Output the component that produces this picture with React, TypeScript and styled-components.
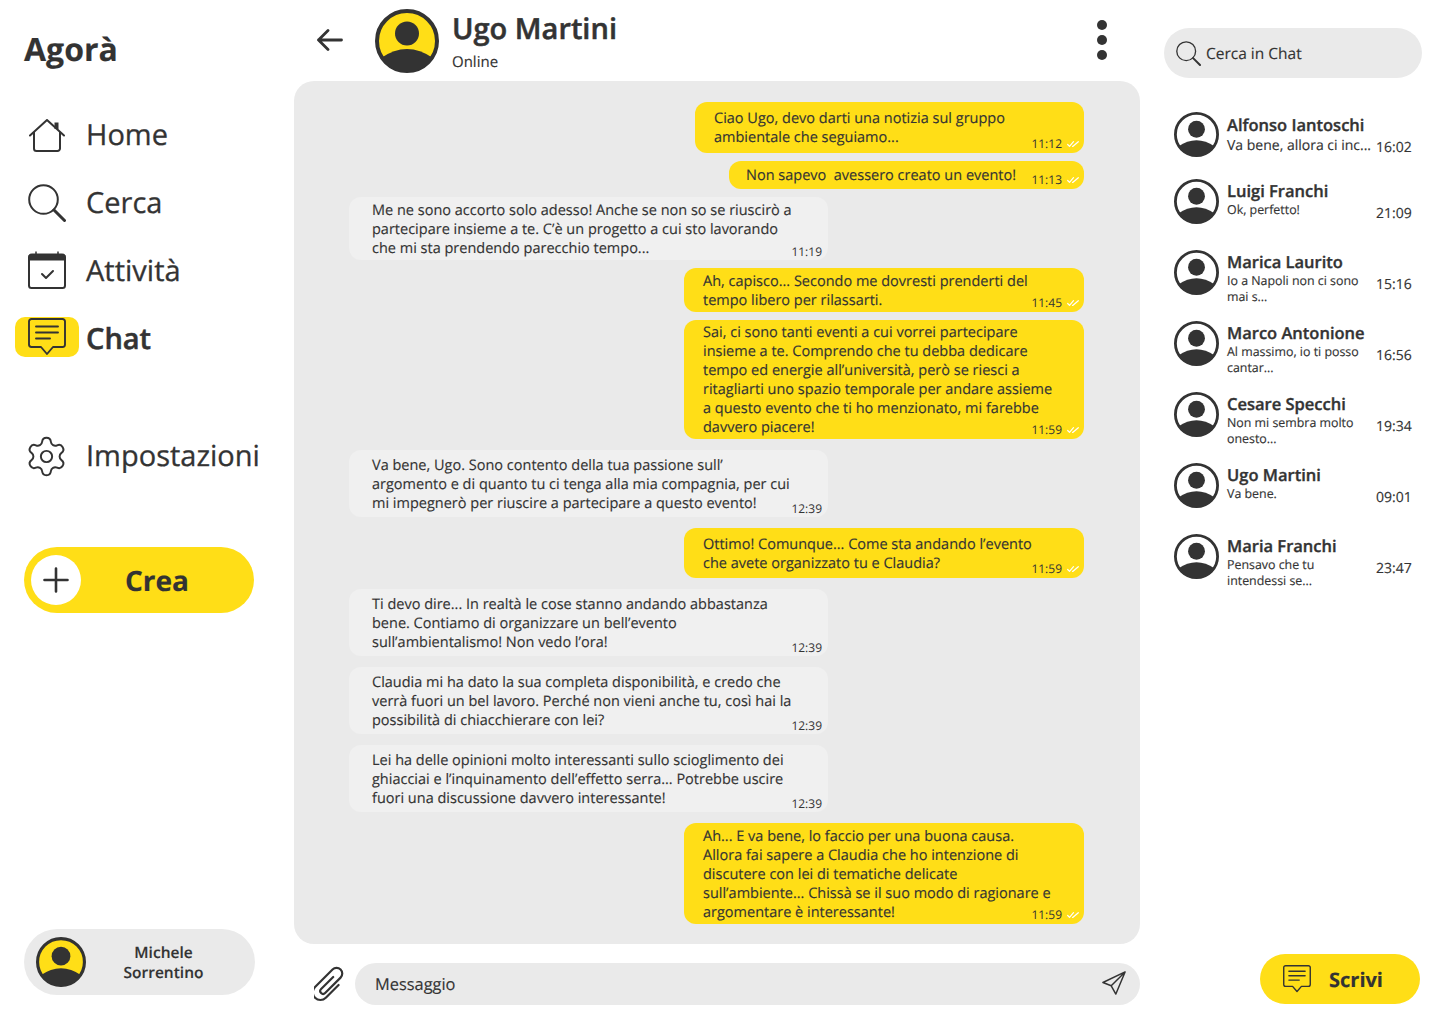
import styled, { createGlobalStyle } from "styled-components";
import { Settings } from "lucide-react";

const INK = "#333333";
const YELLOW = "#ffde17";
const GREY = "#eaeaea";

const messages = [
  { id: 1, mine: true, width: 389, height: 51, top: 7, left: 19, gap: 0, time: "11:12", text: "Ciao Ugo, devo darti una notizia sul gruppo\nambientale che seguiamo..." },
  { id: 2, mine: true, width: 355, height: 28, top: 5, left: 17, gap: 8, time: "11:13", text: "Non sapevo  avessero creato un evento!" },
  { id: 3, mine: false, width: 479, height: 63, top: 4, left: 23, gap: 8, time: "11:19", text: "Me ne sono accorto solo adesso! Anche se non so se riuscirò a\npartecipare insieme a te. C’è un progetto a cui sto lavorando\nche mi sta prendendo parecchio tempo..." },
  { id: 4, mine: true, width: 400, height: 44, top: 4, left: 19, gap: 8, time: "11:45", text: "Ah, capisco... Secondo me dovresti prenderti del\ntempo libero per rilassarti." },
  { id: 5, mine: true, width: 400, height: 119, top: 3, left: 19, gap: 8, time: "11:59", text: "Sai, ci sono tanti eventi a cui vorrei partecipare\ninsieme a te. Comprendo che tu debba dedicare\ntempo ed energie all’università, però se riesci a\nritagliarti uno spazio temporale per andare assieme\na questo evento che ti ho menzionato, mi farebbe\ndavvero piacere!" },
  { id: 6, mine: false, width: 479, height: 67, top: 6, left: 23, gap: 11, time: "12:39", text: "Va bene, Ugo. Sono contento della tua passione sull’\nargomento e di quanto tu ci tenga alla mia compagnia, per cui\nmi impegnerò per riuscire a partecipare a questo evento!" },
  { id: 7, mine: true, width: 400, height: 50, top: 7, left: 19, gap: 11, time: "11:59", text: "Ottimo! Comunque... Come sta andando l’evento\nche avete organizzato tu e Claudia?" },
  { id: 8, mine: false, width: 479, height: 67, top: 6, left: 23, gap: 11, time: "12:39", text: "Ti devo dire... In realtà le cose stanno andando abbastanza\nbene. Contiamo di organizzare un bell’evento\nsull’ambientalismo! Non vedo l’ora!" },
  { id: 9, mine: false, width: 479, height: 67, top: 6, left: 23, gap: 11, time: "12:39", text: "Claudia mi ha dato la sua completa disponibilità, e credo che\nverrà fuori un bel lavoro. Perché non vieni anche tu, così hai la\npossibilità di chiacchierare con lei?" },
  { id: 10, mine: false, width: 479, height: 67, top: 6, left: 23, gap: 11, time: "12:39", text: "Lei ha delle opinioni molto interessanti sullo scioglimento dei\nghiacciai e l’inquinamento dell’effetto serra... Potrebbe uscire\nfuori una discussione davvero interessante!" },
  { id: 11, mine: true, width: 400, height: 101, top: 4, left: 19, gap: 11, time: "11:59", text: "Ah... E va bene, lo faccio per una buona causa.\nAllora fai sapere a Claudia che ho intenzione di\ndiscutere con lei di tematiche delicate\nsull’ambiente... Chissà se il suo modo di ragionare e\nargomentare è interessante!" },
];

const chats = [
  { name: "Alfonso Iantoschi", preview: "Va bene, allora ci inc...", time: "16:02", big: true },
  { name: "Luigi Franchi", preview: "Ok, perfetto!", time: "21:09" },
  { name: "Marica Laurito", preview: "Io a Napoli non ci sono\nmai s...", time: "15:16" },
  { name: "Marco Antonione", preview: "Al massimo, io ti posso\ncantar...", time: "16:56" },
  { name: "Cesare Specchi", preview: "Non mi sembra molto\nonesto...", time: "19:34" },
  { name: "Ugo Martini", preview: "Va bene.", time: "09:01" },
  { name: "Maria Franchi", preview: "Pensavo che tu\nintendessi se...", time: "23:47" },
];

function Avatar({ size, fill }: { size: number; fill: string }) {
  return (
    <svg width={size} height={size} viewBox="0 0 64 64" style={{ flexShrink: 0 }}>
      <circle cx="32" cy="32" r="30" fill={fill} stroke={INK} strokeWidth="4" />
      <circle cx="32" cy="24.5" r="12" fill={INK} />
      <path d="M6.1 49 Q32 31 57.9 49 A31 31 0 0 1 6.1 49Z" fill={INK} />
    </svg>
  );
}

function ChatIcon({ size }: { size: number }) {
  return (
    <svg width={size} height={size} viewBox="0 0 38 38" fill="none" stroke={INK} strokeWidth="1.9" strokeLinecap="round" strokeLinejoin="round">
      <path d="M3.5 1h31A2.5 2.5 0 0 1 37 3.5v23a2.5 2.5 0 0 1-2.5 2.500H25l-6 7-6-7H3.500A2.500 2.500 0 0 1 1 26.500v-23A2.500 2.500 0 0 1 3.500 1Z" />
      <path d="M8 8.500h22M8 14.500h22M8 20.500h14" />
    </svg>
  );
}

function SearchIcon({ size }: { size: number }) {
  return (
    <svg width={size} height={size} viewBox="0 0 38 38" fill="none" stroke={INK} strokeLinecap="round">
      <circle cx="15.500" cy="15.500" r="14.300" strokeWidth="2" />
      <path d="M26 26l10.500 10.500" strokeWidth="3" />
    </svg>
  );
}

export default function App() {
  return (
    <Page>
      <GlobalStyle />
      <Sidebar>
        <Logo>Agorà</Logo>
        <Nav>
          <NavRow>
            <NavIcon>
              <HomeIcon width="36" height="33" viewBox="0 0 36 33" fill="none" stroke={INK} strokeWidth="2" strokeLinejoin="round">
                <path d="M1 16.500 18 1l17 15.500" strokeLinecap="round" />
                <path d="M5 13V29.500A2.500 2.500 0 0 0 7.500 32h21a2.500 2.500 0 0 0 2.500-2.500V13" />
                <path d="M27.500 3.500V10" strokeWidth="4" />
              </HomeIcon>
            </NavIcon>
            <NavLabel>Home</NavLabel>
          </NavRow>
          <NavRow>
            <NavIcon>
              <SearchIcon size={38} />
            </NavIcon>
            <NavLabel>Cerca</NavLabel>
          </NavRow>
          <NavRow>
            <CalendarIcon width="38" height="38" viewBox="0 0 38 38" fill="none" stroke={INK}>
              <rect x="1" y="4" width="36" height="33" rx="2.500" strokeWidth="2" />
              <path d="M1 4.500A2.500 2.500 0 0 1 3.500 3h31A2.500 2.500 0 0 1 37 4.500V9H1Z" fill={INK} strokeWidth="1" />
              <path d="M8 0.500V4M30 0.500V4" strokeWidth="1.500" />
              <path d="M14 23l4 4 7-7" strokeWidth="2" strokeLinecap="round" strokeLinejoin="round" />
            </CalendarIcon>
            <NavLabel>Attività</NavLabel>
          </NavRow>
          <NavRow>
            <ActiveIcon>
              <ChatIcon size={38} />
            </ActiveIcon>
            <NavLabel $active>Chat</NavLabel>
          </NavRow>
          <SettingsRow>
            <NavIcon>
              <GearIcon size={45} color={INK} strokeWidth={1.05} />
            </NavIcon>
            <NavLabel>Impostazioni</NavLabel>
          </SettingsRow>
        </Nav>
        <CreateButton>
          <PlusCircle>
            <svg width="26" height="26" viewBox="0 0 26 26" stroke={INK} strokeWidth="2.600" strokeLinecap="round">
              <path d="M13 1.500v23M1.500 13h23" />
            </svg>
          </PlusCircle>
          <CreateLabel>Crea</CreateLabel>
        </CreateButton>
        <UserPill>
          <Avatar size={50} fill={YELLOW} />
          <UserName>
            Michele
            <br />
            Sorrentino
          </UserName>
        </UserPill>
      </Sidebar>

      <Main>
        <Header>
          <BackButton>
            <svg width="26" height="22" viewBox="0 0 26 22" fill="none" stroke={INK} strokeWidth="2.800" strokeLinecap="round" strokeLinejoin="round">
              <path d="M24.500 11H1.500M11 1.500 1.500 11l9.500 9.500" />
            </svg>
          </BackButton>
          <Avatar size={64} fill={YELLOW} />
          <HeaderText>
            <HeaderName>Ugo Martini</HeaderName>
            <HeaderStatus>Online</HeaderStatus>
          </HeaderText>
          <Kebab>
            <Dot />
            <Dot />
            <Dot />
          </Kebab>
        </Header>
        <Conversation>
          {messages.map((m) => (
            <Bubble key={m.id} $mine={m.mine} $width={m.width} $height={m.height} $top={m.top} $left={m.left} $gap={m.gap}>
              {m.text.split("\n").map((line) => (
                <BubbleLine key={line}>{line}</BubbleLine>
              ))}
              <Meta $mine={m.mine}>
                <span>{m.time}</span>
                {m.mine && (
                  <svg width="12" height="6" viewBox="0 0 12 6" fill="none" stroke="#fff" strokeWidth="1.200" strokeLinecap="round" strokeLinejoin="round">
                    <path d="M0.700 3.500 2.500 5.300 6.500 0.700M5.500 5.300h0.500L11.300 0.700" />
                  </svg>
                )}
              </Meta>
            </Bubble>
          ))}
        </Conversation>
        <Composer>
          <svg width="32" height="36" viewBox="0 0 32 36" fill="none" stroke={INK} strokeWidth="2.300" strokeLinecap="round" strokeLinejoin="round">
            <path transform="translate(15.500 18) rotate(45) scale(0.95)" d="M-2.500-8V10A3 3 0 0 0 3.500 10V-13A6 6 0 0 0-8.500-13V13A8 8 0 0 0 7.500 13V-6" />
          </svg>
          <MessageBox>
            <span>Messaggio</span>
            <svg width="24" height="24" viewBox="0 0 26 26" fill="none" stroke={INK} strokeWidth="1.600" strokeLinejoin="round">
              <path d="M25 1 1 12.500l9 3.500 5 9ZM25 1 10 16" />
            </svg>
          </MessageBox>
        </Composer>
      </Main>

      <RightColumn>
        <SearchBox>
          <SearchIcon size={25} />
          <span>Cerca in Chat</span>
        </SearchBox>
        <ChatList>
          {chats.map((c) => (
            <ChatRow key={c.name}>
              <Avatar size={45} fill="#fff" />
              <ChatText>
                <ChatName>{c.name}</ChatName>
                <ChatPreview $big={c.big}>{c.preview}</ChatPreview>
              </ChatText>
              <ChatTime>{c.time}</ChatTime>
            </ChatRow>
          ))}
        </ChatList>
        <WriteButton>
          <ChatIcon size={28} />
          <span>Scrivi</span>
        </WriteButton>
      </RightColumn>
    </Page>
  );
}

const GlobalStyle = createGlobalStyle`
  html, body {
    margin: 0;
    padding: 0;
    background: #fff;
  }
  body {
    font-family: "Open Sans", "Liberation Sans", sans-serif;
    color: ${INK};
    text-rendering: geometricPrecision;
    -webkit-text-stroke: 0.15px ${INK};
  }
`;

const Page = styled.div`
  width: 1440px;
  height: 1024px;
  display: grid;
  grid-template-columns: 294px 846px 300px;
  overflow: hidden;
`;

const Sidebar = styled.aside`
  display: flex;
  flex-direction: column;
  padding: 28px 0 29px 24px;
`;

const Logo = styled.h1`
  margin: 0;
  font-size: 32px;
  line-height: 44px;
  font-weight: 700;
`;

const Nav = styled.nav`
  display: flex;
  flex-direction: column;
  margin-top: 29px;
`;

const NavRow = styled.div`
  height: 68px;
  display: flex;
  align-items: center;
`;

const SettingsRow = styled(NavRow)`
  margin-top: 49px;
`;

const NavIcon = styled.div`
  width: 62px;
  height: 42px;
  padding-left: 4px;
  box-sizing: border-box;
  display: flex;
  align-items: center;
`;

const HomeIcon = styled.svg`
  margin-left: 1px;
`;

const GearIcon = styled(Settings)`
  margin-left: -4px;
  flex-shrink: 0;
`;

const CalendarIcon = styled.svg`
  margin: -3px 20px 0 4px;
`;

const ActiveIcon = styled.div`
  width: 64px;
  height: 40px;
  margin: -4px 7px 0 -9px;
  border-radius: 10px;
  background: ${YELLOW};
  display: flex;
  justify-content: center;
  align-items: center;
`;

const NavLabel = styled.span<{ $active?: boolean }>`
  font-size: 29px;
  line-height: 38px;
  font-weight: ${({ $active }) => ($active ? 600 : 400)};
  -webkit-text-stroke: ${({ $active }) => ($active ? 0.5 : 0.3)}px ${INK};
`;

const CreateButton = styled.div`
  width: 230px;
  height: 66px;
  margin-top: 57px;
  border-radius: 33px;
  background: ${YELLOW};
  display: flex;
  align-items: center;
  padding-left: 7px;
  box-sizing: border-box;
`;

const PlusCircle = styled.div`
  width: 50px;
  height: 50px;
  border-radius: 50%;
  background: #fff;
  display: flex;
  justify-content: center;
  align-items: center;
`;

const CreateLabel = styled.span`
  margin-left: 44px;
  padding-top: 2px;
  font-size: 28px;
  font-weight: 700;
`;

const UserPill = styled.div`
  width: 231px;
  height: 66px;
  margin-top: auto;
  border-radius: 33px;
  background: ${GREY};
  display: flex;
  align-items: center;
  padding-left: 12px;
  box-sizing: border-box;
`;

const UserName = styled.div`
  width: 155px;
  text-align: center;
  font-size: 15.500px;
  line-height: 20px;
  font-weight: 600;
`;

const Main = styled.main`
  display: flex;
  flex-direction: column;
`;

const Header = styled.header`
  height: 81px;
  display: flex;
  align-items: center;
  padding-left: 23px;
  box-sizing: border-box;
`;

const BackButton = styled.div`
  width: 58px;
  margin-bottom: 1px;
  display: flex;
  align-items: center;
`;

const HeaderText = styled.div`
  margin-left: 13px;
  flex: 1;
`;

const HeaderName = styled.div`
  font-size: 29px;
  line-height: 40px;
  font-weight: 600;
  -webkit-text-stroke: 0.5px ${INK};
`;

const HeaderStatus = styled.div`
  font-size: 15px;
  line-height: 20px;
  margin-top: 3px;
`;

const Kebab = styled.div`
  margin: 0 33px 2px 0;
  display: flex;
  flex-direction: column;
  gap: 5px;
`;

const Dot = styled.span`
  width: 10px;
  height: 10px;
  border-radius: 50%;
  background: ${INK};
`;

const Conversation = styled.section`
  height: 863px;
  box-sizing: border-box;
  padding: 21px 56px 0 55px;
  border-radius: 20px;
  background: ${GREY};
  display: flex;
  flex-direction: column;
`;

const Bubble = styled.div<{ $mine: boolean; $width: number; $height: number; $top: number; $left: number; $gap: number }>`
  position: relative;
  width: ${({ $width }) => $width}px;
  height: ${({ $height }) => $height}px;
  margin-top: ${({ $gap }) => $gap}px;
  align-self: ${({ $mine }) => ($mine ? "flex-end" : "flex-start")};
  box-sizing: border-box;
  padding: ${({ $top }) => $top}px 0 0 ${({ $left }) => $left}px;
  border-radius: 12px;
  background: ${({ $mine }) => ($mine ? YELLOW : "#f0f0f0")};
  font-size: 14.500px;
  line-height: 19px;
`;

const BubbleLine = styled.div`
  width: fit-content;
  white-space: pre;
`;

const Meta = styled.div<{ $mine: boolean }>`
  position: absolute;
  right: ${({ $mine }) => ($mine ? 5 : 6)}px;
  bottom: ${({ $mine }) => ($mine ? 2 : 1)}px;
  display: flex;
  align-items: center;
  gap: 5px;
  font-size: 12px;
  line-height: 14px;
  -webkit-text-stroke: 0;
`;

const Composer = styled.div`
  margin-top: 19px;
  display: flex;
  align-items: center;
  padding-left: 20px;
`;

const MessageBox = styled.div`
  width: 785px;
  height: 42px;
  margin-left: 9px;
  padding: 0 14px 2px 20px;
  box-sizing: border-box;
  border-radius: 21px;
  background: ${GREY};
  display: flex;
  justify-content: space-between;
  align-items: center;
  font-size: 16.400px;
`;

const RightColumn = styled.aside`
  display: flex;
  flex-direction: column;
  padding: 28px 18px 20px 24px;
`;

const SearchBox = styled.div`
  height: 50px;
  border-radius: 25px;
  background: ${GREY};
  display: flex;
  align-items: center;
  gap: 5px;
  padding-left: 12px;
  font-size: 15.500px;
`;

const ChatList = styled.div`
  margin-top: 33px;
  display: flex;
  flex-direction: column;
  gap: 21px;
  padding-left: 10px;
`;

const ChatRow = styled.div`
  height: 50px;
  box-sizing: border-box;
  padding-top: 1px;
  display: grid;
  grid-template-columns: 45px 141px auto;
  column-gap: 8px;

  &:first-child {
    height: 46px;
  }
`;

const ChatText = styled.div`
  display: flex;
  flex-direction: column;
`;

const ChatName = styled.div`
  font-size: 16.500px;
  line-height: 22px;
  font-weight: 600;
  margin-top: 1px;
  white-space: nowrap;
  -webkit-text-stroke: 0.35px ${INK};

  ${ChatRow}:first-child & {
    margin-top: 2px;
  }
`;

const ChatPreview = styled.div<{ $big?: boolean }>`
  font-size: ${({ $big }) => ($big ? 14 : 12.4)}px;
  line-height: ${({ $big }) => ($big ? 20 : 16)}px;
  white-space: pre;
`;

const ChatTime = styled.div`
  padding-top: 25px;
  font-size: 14px;
  line-height: 19px;

  ${ChatRow}:first-child & {
    padding-top: 26px;
  }
`;

const WriteButton = styled.div`
  width: 160px;
  height: 50px;
  margin: auto 2px 0 auto;
  border-radius: 25px;
  background: ${YELLOW};
  display: flex;
  align-items: center;
  gap: 18px;
  padding-left: 23px;
  box-sizing: border-box;
  font-size: 20px;
  font-weight: 700;
`;
